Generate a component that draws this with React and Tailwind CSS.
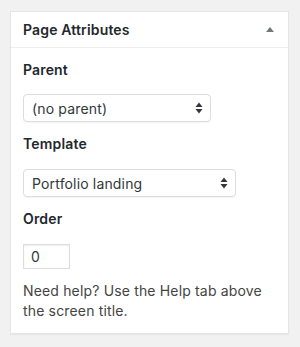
function SelectArrows() {
  return (
    <svg width="8" height="12" viewBox="0 0 8 12" className="text-[#32373c]">
      <path d="M4 0.5 L7.5 5 L0.5 5 Z" fill="currentColor" />
      <path d="M4 11.5 L7.5 7 L0.5 7 Z" fill="currentColor" />
    </svg>
  );
}

function FakeSelect({ value, width }) {
  return (
    <div
      className={`flex items-center justify-between h-[28px] ${width} pl-[8px] pr-[7px] bg-white border border-[#dddddd] rounded-[4px] text-[14px] text-[#32373c] shadow-[0_1px_1px_rgba(0,0,0,0.04)]`}
    >
      <span>{value}</span>
      <SelectArrows />
    </div>
  );
}

export default function App() {
  return (
    <div
      className="min-h-[347px] bg-[#f1f1f1] pt-[11px] pl-[10px] tracking-[0.16px]"
      style={{ fontFamily: 'Inter, "Liberation Sans", sans-serif' }}
    >
      <div className="w-[279px] bg-white border border-[#e5e5e5] shadow-[0_1px_1px_rgba(0,0,0,0.04)]">
        <div className="flex items-center justify-between h-[36px] pl-[12px] pr-[14px] border-b border-[#eeeeee]">
          <h2 className="text-[14px] font-semibold text-[#23282d] leading-none">Page Attributes</h2>
          <svg width="8" height="5" viewBox="0 0 8 5" className="text-[#72777c]">
            <path d="M4 0 L8 5 L0 5 Z" fill="currentColor" />
          </svg>
        </div>
        <div className="px-[12px] pb-[12px] text-[#23282d]">
          <div className="pt-[12px] text-[14px] leading-[20px] font-semibold">Parent</div>
          <div className="mt-[14px]">
            <FakeSelect value="(no parent)" width="w-[188px]" />
          </div>
          <div className="mt-[12px] text-[14px] leading-[20px] font-semibold">Template</div>
          <div className="mt-[15px]">
            <FakeSelect value="Portfolio landing" width="w-[213px]" />
          </div>
          <div className="mt-[12px] text-[14px] leading-[20px] font-semibold">Order</div>
          <div className="mt-[15px] flex items-center w-[47px] h-[25px] pl-[7px] bg-white border border-[#dddddd] shadow-[inset_0_1px_2px_rgba(0,0,0,0.07)] text-[14px] text-[#32373c]">
            0
          </div>
          <p className="mt-[12px] text-[14px] leading-[20px] text-[#444444]">
            Need help? Use the Help tab above the screen title.
          </p>
        </div>
      </div>
    </div>
  );
}
